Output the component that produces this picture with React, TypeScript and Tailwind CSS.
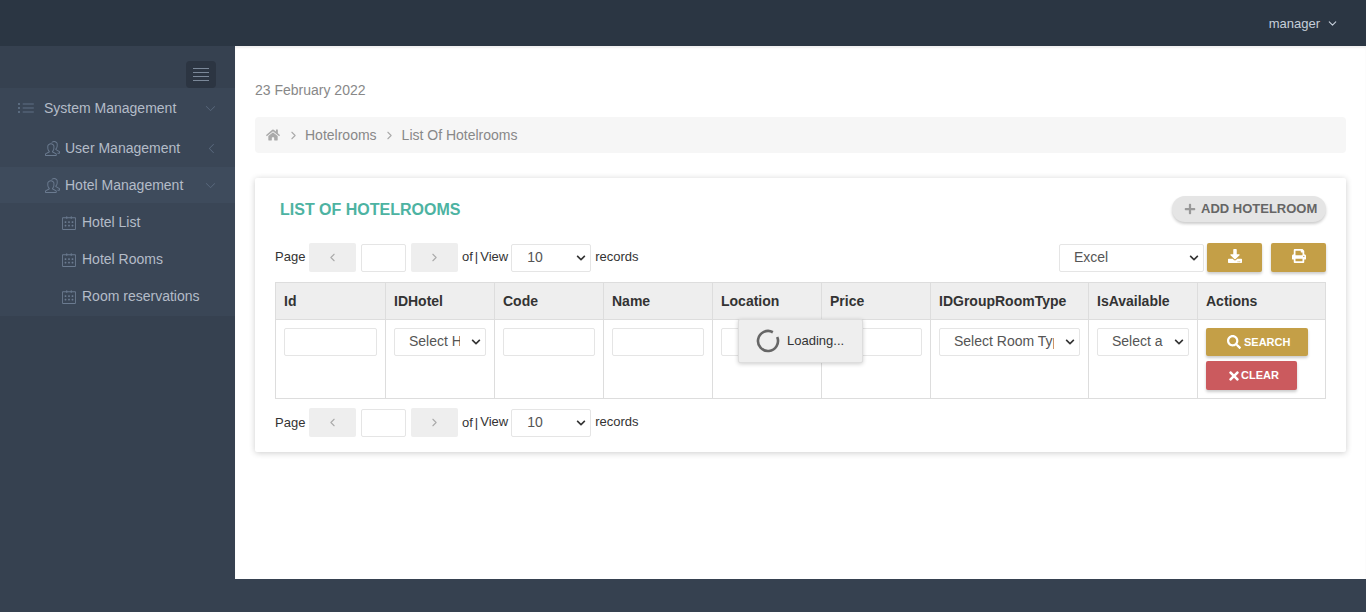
import { ChevronDown, ChevronLeft, ChevronRight } from 'lucide-react';
import { FaChevronDown, FaDownload, FaHome, FaPlus, FaPrint, FaSearch, FaTimes } from 'react-icons/fa';
import { SlArrowDown, SlArrowLeft, SlCalender, SlList, SlPeople } from 'react-icons/sl';

const font = 'font-["Liberation_Sans",Arial,sans-serif]';

function Select({ value, className }: { value: string; className: string }) {
    return (
        <div className={`relative ${className}`}>
            <select className="block h-[28px] w-full appearance-none rounded-[2px] border border-[#e5e5e5] bg-white pl-[14px] pr-[25px] text-[14px] text-[#555]">
                <option>{value}</option>
            </select>
            <FaChevronDown className="pointer-events-none absolute right-[5px] top-[9px] text-[10px] text-[#333]" />
        </div>
    );
}

function Pager({ top }: { top?: boolean }) {
    const nudge = top ? '-translate-y-px' : '';
    return (
        <div className="flex h-[29px] items-center text-[13px] text-[#333]">
            <span className={`w-[34px] ${nudge}`}>Page</span>
            <button className="flex h-[29px] w-[47px] items-center justify-center rounded-[2px] bg-[#eeeeee] text-[#aaa]">
                <ChevronLeft size={13} strokeWidth={2} />
            </button>
            <input className="ml-[5px] h-[28px] w-[45px] rounded-[2px] border border-[#e5e5e5] bg-white" />
            <button className="ml-[5px] flex h-[29px] w-[47px] items-center justify-center rounded-[2px] bg-[#eeeeee] text-[#aaa]">
                <ChevronRight size={13} strokeWidth={2} />
            </button>
            <span className={`ml-[4px] ${nudge}`}>of</span>
            <span className={`ml-[2px] mr-[2px] ${nudge}`}>|</span>
            <span className="-translate-y-px">View</span>
            <Select value="10" className="ml-[3px] w-[80px] [&_select]:pl-[15px]" />
            <span className="ml-[4px] -translate-y-px">records</span>
        </div>
    );
}

const columns = [
    { label: 'Id', width: 'w-[110px]' },
    { label: 'IDHotel', width: 'w-[109px]', select: 'Select Hotel' },
    { label: 'Code', width: 'w-[109px]' },
    { label: 'Name', width: 'w-[109px]' },
    { label: 'Location', width: 'w-[109px]' },
    { label: 'Price', width: 'w-[109px]' },
    { label: 'IDGroupRoomType', width: 'w-[158px]', select: 'Select Room Type' },
    { label: 'IsAvailable', width: 'w-[109px]', select: 'Select a' },
];

function HotelroomTable() {
    return (
        <table className="w-[1051px] table-fixed border-collapse text-[14px]">
            <thead>
                <tr className="h-[37px] bg-[#eeeeee] text-left">
                    {columns.map((c) => (
                        <th key={c.label} className={`${c.width} border border-[#dddddd] px-[8px] font-bold text-[#333]`}>
                            {c.label}
                        </th>
                    ))}
                    <th className="border border-[#dddddd] px-[8px] font-bold text-[#333]">Actions</th>
                </tr>
            </thead>
            <tbody>
                <tr className="h-[79px] align-top">
                    {columns.map((c) => (
                        <td key={c.label} className="border border-[#dddddd] px-[8px] pt-[8px]">
                            {c.select ? (
                                <Select value={c.select} className="w-full [&_select]:pb-[2px]" />
                            ) : (
                                <input className="block h-[28px] w-full rounded-[2px] border border-[#e5e5e5] bg-white" />
                            )}
                        </td>
                    ))}
                    <td className="border border-[#dddddd] px-[8px] pt-[8px]">
                        <button className="flex h-[28px] w-[102px] items-center gap-[3px] rounded-[2px] bg-[#c49f47] pl-[21px] text-[11px] font-bold text-white shadow-[0_2px_3px_rgba(0,0,0,0.2)]">
                            <FaSearch className="text-[14px]" />
                            SEARCH
                        </button>
                        <button className="mt-[5px] flex h-[29px] w-[91px] items-center rounded-[2px] bg-[#cb5a5e] pl-[21px] text-[11px] font-bold text-white shadow-[0_2px_3px_rgba(0,0,0,0.2)]">
                            <FaTimes className="text-[14px]" />
                            CLEAR
                        </button>
                    </td>
                </tr>
            </tbody>
        </table>
    );
}

export default function App() {
    return (
        <div className={`flex h-screen flex-col bg-[#364150] ${font}`}>
            {/* Top bar */}
            <header className="flex h-[46px] shrink-0 items-center justify-end bg-[#2b3643] pb-[1px] pr-[27px] text-[13px] text-[#c6cfda]">
                <span className="translate-y-px">manager</span>
                <ChevronDown size={13} strokeWidth={2} className="ml-[6px] translate-y-px" />
            </header>

            <div className="flex h-[533px] shrink-0">
                {/* Sidebar */}
                <aside className="w-[235px] shrink-0 text-[14px] text-[#b4bcc8]">
                    <div className="flex h-[42px] items-end justify-end pr-[19px]">
                        <div className="flex h-[27px] w-[30px] flex-col items-center justify-center gap-[3px] rounded-[4px] bg-[#2c3542]">
                            <span className="h-px w-[16px] bg-[#7b8899]" />
                            <span className="h-px w-[16px] bg-[#7b8899]" />
                            <span className="h-px w-[16px] bg-[#7b8899]" />
                            <span className="h-px w-[16px] bg-[#7b8899]" />
                        </div>
                    </div>
                    <nav className="bg-[#3a4656]">
                        <div className="flex h-[40px] items-center pl-[18px] pr-[20px]">
                            <SlList className="text-[16px] text-[#5f6f84]" />
                            <span className="ml-[10px] flex-1">System Management</span>
                            <SlArrowDown className="text-[9px] text-[#5f6f84]" />
                        </div>
                        <div className="flex h-[39px] items-center pl-[45px] pr-[19px] pt-[2px]">
                            <SlPeople className="text-[15px] text-[#6b7b90]" />
                            <span className="ml-[5px] flex-1">User Management</span>
                            <SlArrowLeft className="text-[9px] text-[#5f6f84]" />
                        </div>
                        <div className="flex h-[36px] items-center bg-[#3e4b5c] pl-[45px] pr-[20px]">
                            <SlPeople className="text-[15px] text-[#6b7b90]" />
                            <span className="ml-[5px] flex-1">Hotel Management</span>
                            <SlArrowDown className="text-[9px] text-[#5f6f84]" />
                        </div>
                        {['Hotel List', 'Hotel Rooms', 'Room reservations'].map((item) => (
                            <div key={item} className="flex h-[37px] items-center pl-[62px] pt-[2px] last:h-[39px] last:pb-[2px]">
                                <SlCalender className="text-[14px] text-[#6b7b90]" />
                                <span className="ml-[6px]">{item}</span>
                            </div>
                        ))}
                    </nav>
                </aside>

                {/* Page content */}
                <main className="flex-1 bg-white px-[20px] shadow-[inset_0_2px_2px_rgba(0,0,0,0.06)]">
                    <div className="pt-[36px] text-[14px] leading-[16px] text-[#888]">23 February 2022</div>
                    <div className="mt-[19px] flex h-[36px] items-center rounded-[4px] bg-[#f6f6f6] pl-[11px] text-[14px] text-[#888]">
                        <FaHome className="text-[14px] text-[#aaa]" />
                        <ChevronRight size={13} strokeWidth={2} className="ml-[7px] text-[#aaa]" />
                        <span className="ml-[5px]">Hotelrooms</span>
                        <ChevronRight size={13} strokeWidth={2} className="ml-[6px] text-[#aaa]" />
                        <span className="ml-[6px]">List Of Hotelrooms</span>
                    </div>

                    <section className="relative mt-[25px] h-[274px] rounded-[2px] bg-white px-[20px] shadow-[0_1px_6px_rgba(0,0,0,0.2)]">
                        <div className="flex h-[65px] items-start justify-between pl-[5px] pt-[18px]">
                            <h1 className="pt-[5px] text-[16px] leading-[18px] font-bold text-[#4db3a2]">LIST OF HOTELROOMS</h1>
                            <button className="flex h-[26px] w-[154px] items-center gap-[5px] rounded-[13px] bg-[#e5e5e5] pl-[12px] text-[13px] font-bold text-[#666] shadow-[0_2px_3px_rgba(0,0,0,0.2)]">
                                <FaPlus className="text-[12px] text-[#999]" />
                                ADD HOTELROOM
                            </button>
                        </div>

                        <div className="flex h-[29px] items-center justify-between">
                            <Pager top />
                            <div className="flex items-center">
                                <Select value="Excel" className="w-[145px]" />
                                <button className="ml-[3px] flex h-[29px] w-[55px] items-center justify-center rounded-[2px] bg-[#c49f47] pb-[4px] text-white shadow-[0_2px_3px_rgba(0,0,0,0.2)]">
                                    <FaDownload className="text-[14px]" />
                                </button>
                                <button className="ml-[9px] flex h-[29px] w-[55px] items-center justify-center rounded-[2px] bg-[#c49f47] pb-[4px] text-white shadow-[0_2px_3px_rgba(0,0,0,0.2)]">
                                    <FaPrint className="text-[14px]" />
                                </button>
                            </div>
                        </div>

                        <div className="mt-[10px]">
                            <HotelroomTable />
                        </div>

                        <div className="mt-[9px]">
                            <Pager />
                        </div>

                        {/* Loading overlay */}
                        <div className="absolute left-[483px] top-[141px] flex h-[44px] w-[125px] items-center rounded-[2px] border border-[#dddddd] bg-[#eeeeee] pl-[17px] text-[13px] text-[#333] shadow-[0_1px_4px_rgba(0,0,0,0.2)]">
                            <svg width="24" height="24" viewBox="0 0 24 24" fill="none">
                                <path d="M21.2 8.1A10 10 0 1 1 16.85 3.25" stroke="#666" strokeWidth="2.6" />
                            </svg>
                            <span className="ml-[7px]">Loading...</span>
                        </div>
                    </section>
                </main>
            </div>

            <div className="flex-1" />
        </div>
    );
}
